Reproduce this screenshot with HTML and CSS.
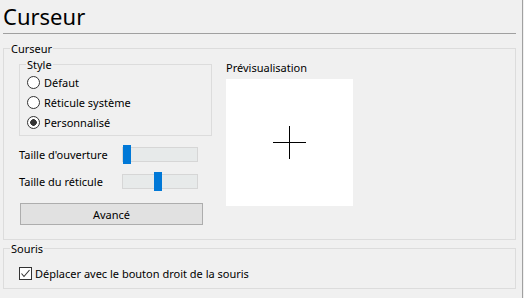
FILE: index.html
```html
<!DOCTYPE html>
<html lang="fr">
<head>
    <meta charset="UTF-8">
    <meta name="viewport" content="width=device-width, initial-scale=1.0">
    <title>Curseur</title>
    <link rel="stylesheet" href="styles.css">
</head>
<body>
    <div class="page">
        <h1>Curseur</h1>

        <fieldset class="group group-cursor">
            <legend>Curseur</legend>
            <div class="cursor-body">
                <div class="left-col">
                    <fieldset class="group group-style">
                        <legend>Style</legend>
                        <label class="radio-row"><input type="radio" name="style"> Défaut</label>
                        <label class="radio-row"><input type="radio" name="style"> Réticule système</label>
                        <label class="radio-row"><input type="radio" name="style" checked> Personnalisé</label>
                    </fieldset>

                    <div class="slider-row first">
                        <span class="slider-label">Taille d'ouverture</span>
                        <input class="slider" type="range" min="0" max="100" value="0">
                    </div>
                    <div class="slider-row">
                        <span class="slider-label">Taille du réticule</span>
                        <input class="slider" type="range" min="0" max="100" value="47">
                    </div>

                    <button class="btn">Avancé</button>
                </div>

                <div class="right-col">
                    <div class="preview-label">Prévisualisation</div>
                    <div class="preview">
                        <svg width="33" height="33" viewBox="0 0 33 33">
                            <line x1="0" y1="16.5" x2="33" y2="16.5" stroke="#000" stroke-width="1"/>
                            <line x1="16.5" y1="0" x2="16.5" y2="33" stroke="#000" stroke-width="1"/>
                        </svg>
                    </div>
                </div>
            </div>
        </fieldset>

        <fieldset class="group group-mouse">
            <legend>Souris</legend>
            <label class="check-row">
                <span class="checkbox">
                    <svg width="11" height="11" viewBox="0 0 11 11">
                        <polyline points="1.5,5.5 4,8.5 9.5,2" fill="none" stroke="#333" stroke-width="1.1"/>
                    </svg>
                </span>
                Déplacer avec le bouton droit de la souris
            </label>
        </fieldset>
    </div>
</body>
</html>
```

FILE: styles.css
```css
body { margin: 0; background: #f0f0f0; color: #000; font-family: "Noto Sans", sans-serif; font-size: 11px; }
.page { width: 522px; height: 298px; border-right: 1px solid #a0a0a0; }
h1 { margin: 0 6px 0 3px; padding: 2px 0 3px 0; font-size: 22px; font-weight: normal; line-height: 28px; border-bottom: 1px solid #a0a0a0; }

/* group boxes */
.group { border: 1px solid #dcdcdc; margin: 0; padding: 0; min-width: 0; }
.group legend { padding: 0 1px; margin-left: 6px; line-height: 15px; }
.group-cursor { margin: 7px 6px 0 3px; padding: 1px 0 14px 0; }
.group-mouse { margin: 1px 6px 0 3px; padding: 6px 0 0 0; height: 48px; box-sizing: border-box; }

.cursor-body { display: flex; gap: 14px; padding: 0 15px; }
.left-col { width: 193px; display: flex; flex-direction: column; }

.group-style { padding: 0 0 3px 0; }
.radio-row { display: flex; align-items: center; gap: 4px; height: 20px; padding-left: 7px; }
.radio-row input { appearance: none; margin: 0; width: 13px; height: 13px; border: 1px solid #333; border-radius: 50%; background: #fff; box-sizing: border-box; }
.radio-row input:checked { background: radial-gradient(circle, #333 0 3px, #fff 3.6px); }

/* sliders */
.slider-row { display: flex; align-items: center; height: 27px; }
.slider-row.first { margin-top: 5px; }
.slider-label { width: 103px; }
.slider { -webkit-appearance: none; appearance: none; margin: 0; width: 76px; height: 19px; background: transparent; }
.slider::-webkit-slider-runnable-track { height: 15px; background: #e7eaea; border: 1px solid #d6d6d6; box-sizing: border-box; }
.slider::-webkit-slider-thumb { -webkit-appearance: none; width: 8px; height: 19px; margin-top: -3px; background: #0078d7; border: none; }

.btn { margin: 8px 0 0 1px; width: 183px; height: 22px; border: 1px solid #adadad; background: #e1e1e1; font-family: inherit; font-size: 11px; color: #000; padding: 0; }

/* preview */
.right-col { display: flex; flex-direction: column; padding-top: 3px; }
.preview-label { line-height: 15px; }
.preview { width: 127px; height: 127px; margin-top: 4px; background: #fff; display: flex; align-items: center; justify-content: center; }

.check-row { display: flex; align-items: center; gap: 3px; height: 22px; margin-left: 15px; }
.checkbox { width: 13px; height: 13px; border: 1px solid #333; box-sizing: border-box; background: #fff; display: flex; align-items: center; justify-content: center; }
```
